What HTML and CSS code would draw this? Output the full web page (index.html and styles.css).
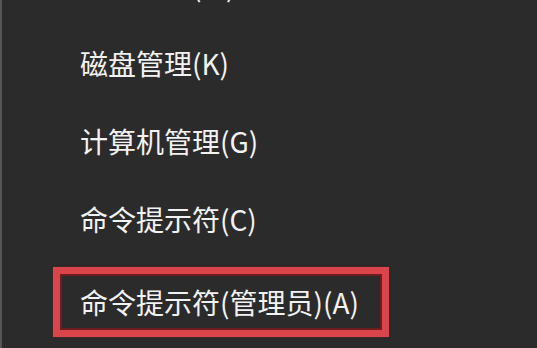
FILE: index.html
```html
<!DOCTYPE html>
<html lang="zh-CN">
<head>
    <meta charset="UTF-8">
    <meta name="viewport" content="width=device-width, initial-scale=1.0">
    <title>快速链接菜单</title>
    <link rel="stylesheet" href="styles.css">
</head>
<body>
    <ul class="menu">
        <li class="item">网络连接(W)</li>
        <li class="item">磁盘管理(K)</li>
        <li class="item">计算机管理(G)</li>
        <li class="item">命令提示符(C)</li>
        <li class="item"><span class="marked">命令提示符(管理员)(A)</span></li>
    </ul>
</body>
</html>
```

FILE: styles.css
```css
html, body {
    margin: 0;
    height: 100%;
}
body {
    background: #2b2b2b;
    border-left: 2px solid #555555;
    overflow: hidden;
    font-family: "Noto Sans CJK SC", "Noto Sans", sans-serif;
    color: #f2f2f2;
}
.menu {
    list-style: none;
    margin: -54px 0 0 0;
    padding: 0 0 0 78px;
}
.item {
    height: 78px;
    display: flex;
    align-items: center;
    font-size: 28px;
    white-space: nowrap;
}
.marked {
    box-sizing: border-box;
    display: flex;
    align-items: center;
    width: 336px;
    height: 70px;
    margin: 10px 0 0 -27px;
    padding-left: 20px;
    border: 7px solid #d9454b;
    box-shadow: inset 0 0 0 2px #6e1d20, 0 0 2px #5a2224;
}
```
